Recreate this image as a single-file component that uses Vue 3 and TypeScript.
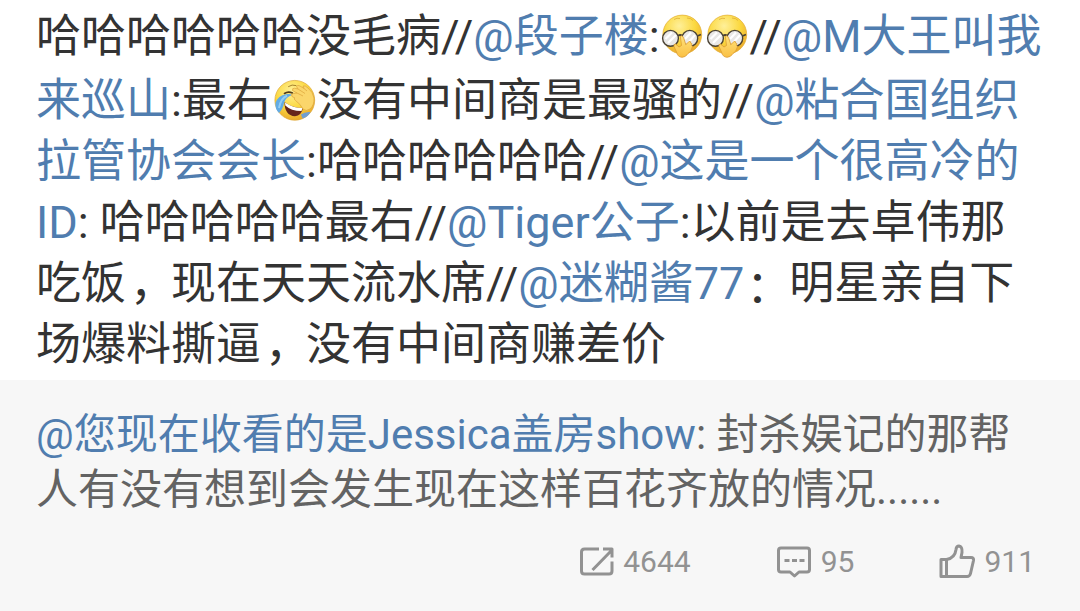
<script setup lang="ts">
interface Part { text?: string; link?: boolean; mark?: 'comma' | 'colon'; emoji?: 'cover' | 'laugh' }
const lines: Part[][] = [
  [{ text: '哈哈哈哈哈哈没毛病//' }, { text: '@段子楼', link: true }, { text: ':' }, { emoji: 'cover' }, { emoji: 'cover' }, { text: '//' }, { text: '@M大王叫我', link: true }],
  [{ text: '来巡山', link: true }, { text: ':最右' }, { emoji: 'laugh' }, { text: '没有中间商是最骚的//' }, { text: '@粘合国组织', link: true }],
  [{ text: '拉管协会会长', link: true }, { text: ':哈哈哈哈哈哈//' }, { text: '@这是一个很高冷的', link: true }],
  [{ text: 'ID', link: true }, { text: ': 哈哈哈哈哈最右//' }, { text: '@Tiger公子', link: true }, { text: ':以前是去卓伟那' }],
  [{ text: '吃饭' }, { text: '，', mark: 'comma' }, { text: '现在天天流水席//' }, { text: '@迷糊酱77', link: true }, { text: '：', mark: 'colon' }, { text: '明星亲自下' }],
  [{ text: '场爆料撕逼' }, { text: '，', mark: 'comma' }, { text: '没有中间商赚差价' }],
]
</script>

<template>
  <main class="post">
    <svg class="defs" width="0" height="0">
      <defs>
        <radialGradient id="face" cx="42%" cy="28%" r="75%">
          <stop offset="0" stop-color="#fff09a" />
          <stop offset=".55" stop-color="#fbd83f" />
          <stop offset="1" stop-color="#e9a72b" />
        </radialGradient>
        <linearGradient id="hand" x1="0" y1="0" x2="0" y2="1">
          <stop offset="0" stop-color="#ffe27a" />
          <stop offset="1" stop-color="#fac044" />
        </linearGradient>
      </defs>
    </svg>
    <section class="comment">
      <p v-for="(line, i) in lines" :key="i" class="line">
        <template v-for="(part, j) in line" :key="j">
          <svg v-if="part.emoji === 'cover'" class="emoji" viewBox="0 0 45 45">
            <circle cx="22.300" cy="20.500" r="19.400" fill="url(#face)" stroke="#e3ae35" stroke-width=".7" />
            <path d="M14 5.500Q17 3.500 20 4.500M27 4Q31 4 33 6.500" fill="none" stroke="#dfad35" stroke-width=".8" />
            <g fill="#e9e8e6" stroke="#4a4234" stroke-width="1.400">
              <circle cx="10.500" cy="24.300" r="7.900" />
              <circle cx="29.800" cy="24.300" r="7.900" />
            </g>
            <path d="M5.500 25L12 18.500M8 29L16 21M25 25L31 18.500M28 29L35 21" stroke="#fff" stroke-width="2.200" />
            <path d="M18 22Q20 20 22.500 22M37.500 22L41 20.500" fill="none" stroke="#4a4234" stroke-width="1.700" />
            <path d="M20.500 24Q20 21.800 21.500 21.800Q23 21.800 23.800 24.500L25.800 30.500L29 27.600Q30.800 26.600 30.700 29Q32.500 29 31.700 31.300Q33 32 32 34Q31.300 37.500 28 39.500Q25.500 43.500 22 43.300Q17.500 43 16.500 38L14 32.500Q13.500 30 15.500 30L19 33L21.500 31.500Z" fill="url(#hand)" stroke="#dc9c34" stroke-width=".8" stroke-linejoin="round" />
          </svg>
          <svg v-else-if="part.emoji === 'laugh'" class="emoji" viewBox="0 0 45 45">
            <circle cx="22.800" cy="22.300" r="19.900" fill="url(#face)" stroke="#dda637" stroke-width=".7" />
            <path d="M16.500 8.500Q20 6 24 7.500" fill="none" stroke="#a5822e" stroke-width="1" stroke-linecap="round" />
            <path d="M12.500 15.500Q16 13 20.500 15" fill="none" stroke="#513b1a" stroke-width="1.600" stroke-linecap="round" />
            <path d="M12.500 24Q20 30 31 30Q29.500 37.500 23 38.300Q12.500 37.500 12.500 24Z" fill="#65251c" />
            <path d="M13 24.500Q21 30 30.500 30L29.500 33Q19 33 13.300 27.500Z" fill="#fff" />
            <path d="M20.500 17Q13.500 19 12 25Q11 31 7 35Q3 31 3.500 25Q6 17.500 14 16.300Q18 15.500 20.500 17Z" fill="#62abe5" />
            <path d="M15 17.800Q9 20 7 30" fill="none" stroke="#94cdf3" stroke-width="2" />
            <path d="M29 36.500Q33 33.500 38.500 34Q36 39 30.500 40.500Z" fill="#709ed3" />
            <path d="M20 18.500Q18.500 16 21.500 15.500L25 15L20.500 12.500Q20 10 22.500 10.200L26 11L24.500 8.500Q25.500 6.500 28 8L32 10.500L31 8Q33 7 36 10Q41 14 42 20Q42.500 27 38 31Q34 34 31 31Q28.500 26 23.500 22.500Q21 20.500 23 20Z" fill="#fbd66b" stroke="#dfa940" stroke-width=".8" stroke-linejoin="round" />
            <path d="M25 15L31 18M26 11L33 15.500M32 10.500L35 13" fill="none" stroke="#dfa940" stroke-width=".8" />
          </svg>
          <span v-else :class="[part.mark, { link: part.link }]">{{ part.text }}</span>
        </template>
      </p>
    </section>
    <section class="source">
      <p><span class="link">@您现在收看的是Jessica盖房show</span>: 封杀娱记的那帮</p>
      <p>人有没有想到会发生现在这样百花齐放的情况......</p>
      <footer class="stats">
        <span class="stat repost">
          <svg width="36" height="32" viewBox="0 0 36 32"><path d="M20 3H5.500Q2.500 3 2.500 6V25Q2.500 28 5.500 28H30Q33 28 33 25V15.500M13.500 24L32 5M24 3H33V11.500" /></svg>4644
        </span>
        <span class="stat reply">
          <svg width="36" height="32" viewBox="0 0 36 32"><path d="M5 2H31Q33.500 2 33.500 4.500V23.500Q33.500 26 31 26H23L18.500 30L14 26H5Q2.500 26 2.500 23.500V4.500Q2.500 2 5 2ZM8.500 14.500H13.500M16 14.500H21M23.500 14.500H28.500" /></svg>95
        </span>
        <span class="stat like">
          <svg width="38" height="36" viewBox="0 0 38 36"><path d="M3 15.500H8.500V32.500H3ZM8.500 15.500Q17 14 18 5.500Q18.300 2 21 2Q24.500 2.500 24 8.500L23 13.500H33Q36 13.500 35.500 16.500L32.500 29.500Q31.800 32.500 29 32.500H8.500" /></svg>911
        </span>
      </footer>
    </section>
  </main>
</template>

<style>
body { margin: 0; background: #fff; overflow: hidden; }
</style>
<style scoped>
.post { display: flex; flex-direction: column; width: 1080px; height: 611px; font-family: Roboto, "Noto Sans CJK SC", sans-serif; color: #333; }
.defs { display: block; height: 0; flex: none; }
.comment { height: 380px; box-sizing: border-box; padding: 6px 36px 0; font-size: 45px; }
p { margin: 0; white-space: pre; }
.line { height: 61px; line-height: 61px; display: flex; align-items: center; }
.line:first-child { margin-bottom: 3px; }
.emoji { width: 45px; height: 45px; flex: none; }
.link { color: #507daf; }
.comma { transform: translate(4px, 1px); }
.colon { transform: translate(2px, 4px); }
.source { height: 231px; box-sizing: border-box; padding: 27px 36px 0; background: #f7f7f7; color: #636363; font-size: 42px; line-height: 55px; }
.stats { display: flex; justify-content: flex-end; height: 38px; margin: 26px 9px 0 0; color: #929292; font-size: 30px; line-height: 38px; }
.stat { display: flex; align-items: center; }
.stat svg { fill: none; stroke: #929292; stroke-width: 3; stroke-linejoin: round; margin-right: 8px; }
.reply { margin-left: 85px; }
.reply svg { margin-right: 9px; }
.like { margin-left: 84px; }
</style>
